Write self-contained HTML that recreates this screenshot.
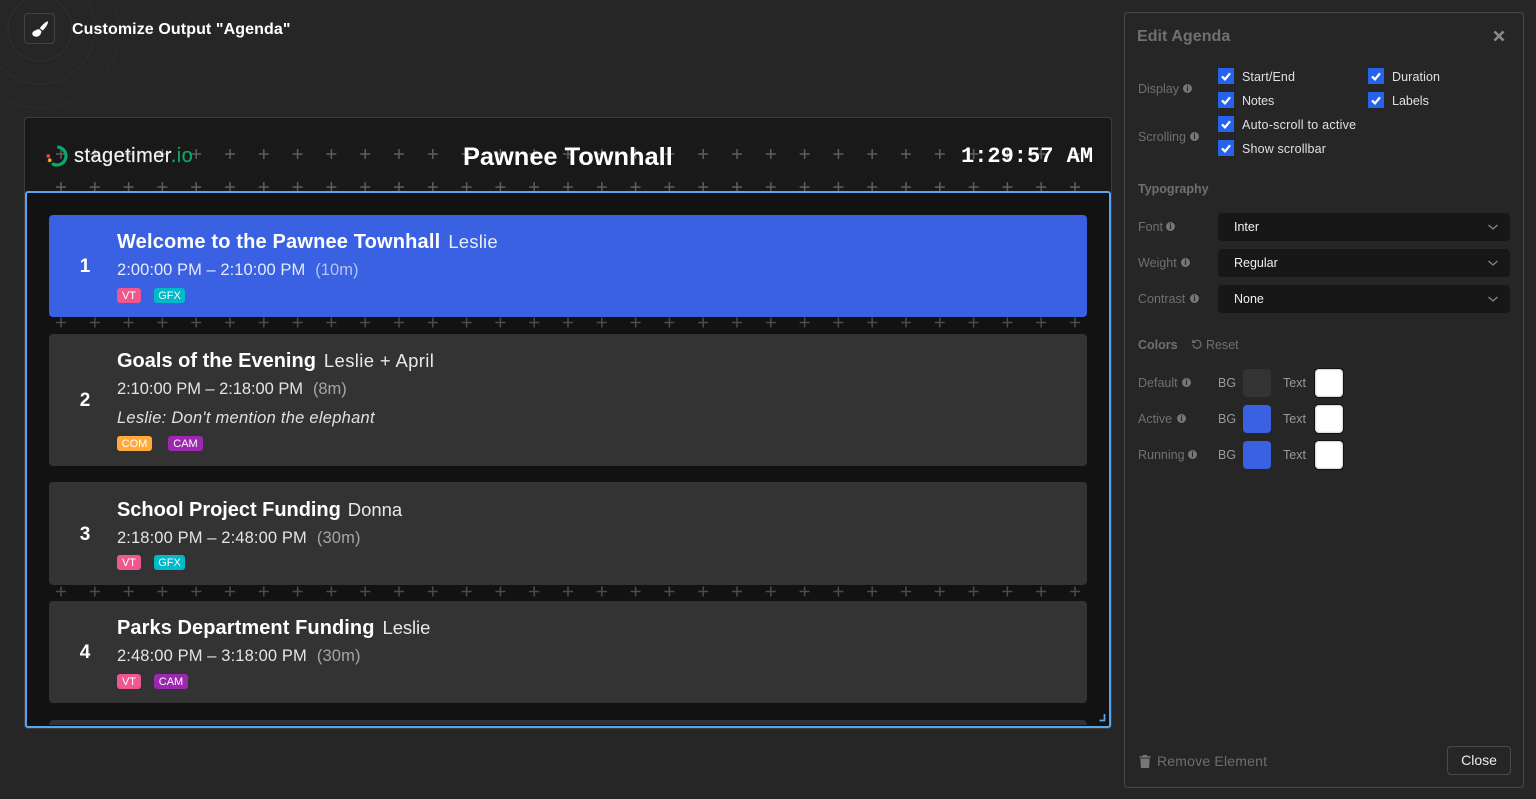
<!DOCTYPE html>
<html><head><meta charset="utf-8"><title>Customize Output</title>
<style>
html,body{margin:0;padding:0;width:1536px;height:799px;overflow:hidden;background:#262626}
body{position:relative;font-family:"Liberation Sans",sans-serif;color:#fff}
.a,.t{position:absolute}
.t{white-space:nowrap;line-height:20px;height:20px}
.card{position:absolute;left:49px;width:1038px;background:#333;border-radius:4px}
.n{font-size:19px;font-weight:bold;width:24px;text-align:center;left:73px}
.h{font-size:20px;font-weight:bold;left:117px}
.h span{font-weight:normal;font-size:18.5px;margin-left:8px;color:#e8e8e8}
.tm{font-size:16.5px;left:117px;color:#e4e4e4}
.tm span{color:#a5a5a5;margin-left:10px;font-size:16.5px}
.b .tm{color:#e6ebfb}.b .tm span{color:#b4c4f2}.b .h span{color:#e8edfc}
.tag{position:absolute;height:15px;line-height:16px;border-radius:3px;font-size:11px;color:#fff;text-align:center}
.l{font-size:12.5px;color:#707070;left:1138px}
.cl{font-size:12.5px;color:#e0e0e0;left:1242px;letter-spacing:.1px}
.cb{position:absolute;width:16px;height:16px;background:#2563eb}
.sel{position:absolute;left:1218px;width:292px;height:28px;background:#171717;border-radius:4px}
.sel .t{left:16px;top:4px;font-size:12.5px;color:#f0f0f0}
.sw{position:absolute;width:28px;height:28px;border-radius:4px}
.w{background:#fff;box-shadow:inset 0 0 2px #999,0 0 0 1px #111}
.s{font-size:12.5px;color:#999}
.i{position:absolute;width:9px;height:9px;border-radius:50%;background:#767676;color:#262626;font-size:8px;line-height:9px;text-align:center;font-weight:bold}
</style></head><body>

<svg class="a" style="left:0;top:0" width="140" height="120"><g fill="none" stroke-width="1"><circle cx="40" cy="29" r="32" stroke="#303030"/><circle cx="40" cy="29" r="55" stroke="#2e2e2e"/><circle cx="40" cy="29" r="79" stroke="#2c2c2c"/></g></svg>
<div class="a" style="left:24px;top:13px;width:29px;height:29px;border:1.5px solid #424242;border-radius:4px;background:#262626"></div>
<svg class="a" style="left:30px;top:20px" width="20" height="20" viewBox="0 0 20 20"><path d="M18 1.200C18.500 4 14.500 9 12.500 10.500L9.800 8.300C11.500 5.500 15 2 18 1.200z" fill="#fff"/><path d="M9.300 9.300l2 1.800c.2 3-2 5.600-5 5.600-2 0-4-1-4-2.800 0-2 1.500-3 3-3.400.5-.7 2-1.200 4-1.200z" fill="#fff"/></svg>
<div class="t" style="left:72px;top:20px;font-size:16px;font-weight:bold;letter-spacing:.1px">Customize Output "Agenda"</div>

<div class="a" style="left:24px;top:117px;width:1086px;height:610px;background:#191919;border:1px solid #3c3c3c;border-radius:4px"></div>
<svg class="a" style="left:0;top:0" width="1120" height="200" fill="none">
<path d="M56 154H1081M56 187H1081" stroke="#5e5e5e" stroke-width="1.500" stroke-dasharray="10 23.800"/>
<path d="M60.250 154H1081M60.250 187H1081" stroke="#5e5e5e" stroke-width="10" stroke-dasharray="1.500 32.300"/>
</svg>

<div class="a" style="left:25px;top:191px;width:1082px;height:533px;background:#121212;border:2px solid #5aa5f0;border-radius:3px"></div>
<svg class="a" style="left:0;top:300px" width="1120" height="310" fill="none">
<path d="M56 22.500H1081M56 291.500H1081" stroke="#4c4c4c" stroke-width="1.500" stroke-dasharray="10 23.800"/>
<path d="M60.250 22.500H1081M60.250 291.500H1081" stroke="#4c4c4c" stroke-width="10" stroke-dasharray="1.500 32.300"/>
</svg>

<svg class="a" style="left:44px;top:143px" width="26" height="26" viewBox="0 0 26 26"><path d="M13.300 4A9 9 0 1 1 8 20.500" fill="none" stroke="#0aa86a" stroke-width="3.200"/><circle cx="4.300" cy="13" r="1.900" fill="#e5433f"/><circle cx="5.700" cy="17.300" r="1.900" fill="#f5a524"/></svg>
<div class="t" style="left:74px;top:146px;font-size:20px;letter-spacing:.45px;color:#f2f2f2;-webkit-text-stroke:.2px #f2f2f2">stagetimer<span style="color:#0aa86a;-webkit-text-stroke:.2px #0aa86a">.io</span></div>
<div class="t" style="left:463px;top:147px;font-size:25.4px;font-weight:bold;line-height:20px">Pawnee Townhall</div>
<div class="t" style="left:961px;top:147px;font-size:22px;font-weight:bold;font-family:'Liberation Mono',monospace">1:29:57 AM</div>

<div class="card b" style="top:215px;height:102px;background:#3961e2"></div>
<div class="b">
<div class="t n" style="top:257px">1</div>
<div class="t h" style="top:232px;letter-spacing:.17px">Welcome to the Pawnee Townhall<span style="letter-spacing:.2px">Leslie</span></div>
<div class="t tm" style="top:260px;letter-spacing:.05px">2:00:00 PM – 2:10:00 PM<span>(10m)</span></div>
</div>
<div class="tag" style="left:117px;top:288px;width:24px;background:#f0578f">VT</div>
<div class="tag" style="left:154px;top:288px;width:31px;background:#00b9c9">GFX</div>

<div class="card" style="top:334px;height:132px"></div>
<div class="t n" style="top:391px">2</div>
<div class="t h" style="top:351px">Goals of the Evening<span style="letter-spacing:.35px">Leslie + April</span></div>
<div class="t tm" style="top:379px;letter-spacing:-.05px">2:10:00 PM – 2:18:00 PM<span>(8m)</span></div>
<div class="t" style="left:117px;top:408px;font-size:16.500px;font-style:italic;color:#e0e0e0;letter-spacing:.26px">Leslie: Don't mention the elephant</div>
<div class="tag" style="left:117px;top:436px;width:35px;background:#ffaa3b">COM</div>
<div class="tag" style="left:168px;top:436px;width:35px;background:#9c27b0">CAM</div>

<div class="card" style="top:482px;height:103px"></div>
<div class="t n" style="top:525px">3</div>
<div class="t h" style="top:500px;letter-spacing:-.03px">School Project Funding<span style="margin-left:7px">Donna</span></div>
<div class="t tm" style="top:528px;letter-spacing:.12px">2:18:00 PM – 2:48:00 PM<span>(30m)</span></div>
<div class="tag" style="left:117px;top:555px;width:24px;background:#f0578f">VT</div>
<div class="tag" style="left:154px;top:555px;width:31px;background:#00b9c9">GFX</div>

<div class="card" style="top:601px;height:102px"></div>
<div class="t n" style="top:643px">4</div>
<div class="t h" style="top:618px;letter-spacing:.08px">Parks Department Funding<span style="letter-spacing:-.1px">Leslie</span></div>
<div class="t tm" style="top:646px;letter-spacing:.12px">2:48:00 PM – 3:18:00 PM<span>(30m)</span></div>
<div class="tag" style="left:117px;top:674px;width:24px;background:#f0578f">VT</div>
<div class="tag" style="left:154px;top:674px;width:34px;background:#9c27b0">CAM</div>

<div class="card" style="top:720px;height:5px;border-radius:4px 4px 0 0;background:#2d3338"></div>
<svg class="a" style="left:1097px;top:713px" width="10" height="10"><path d="M7.500 1V7.500H2.500" fill="none" stroke="#5aa5f0" stroke-width="1.700"/></svg>

<div class="a" style="left:1124px;top:12px;width:398px;height:774px;border:1px solid #4a4a4a;border-radius:4px"></div>
<div class="t" style="left:1137px;top:27px;font-size:16px;font-weight:bold;color:#707070;letter-spacing:.05px">Edit Agenda</div>
<svg class="a" style="left:1493px;top:30px" width="12" height="12"><path d="M1.500 1.500L10.500 10.500M10.500 1.500L1.500 10.500" stroke="#8a8a8a" stroke-width="2.600"/></svg>

<div class="t l" style="top:79px">Display</div><div class="i" style="left:1183px;top:84px">i</div>
<div class="t l" style="top:127px">Scrolling</div><div class="i" style="left:1190px;top:132px">i</div>

<div class="cb" style="left:1218px;top:68px"></div><div class="cb" style="left:1368px;top:68px"></div>
<div class="cb" style="left:1218px;top:92px"></div><div class="cb" style="left:1368px;top:92px"></div>
<div class="cb" style="left:1218px;top:116px"></div><div class="cb" style="left:1218px;top:140px"></div>
<svg class="a" style="left:1218px;top:68px" width="166" height="88" fill="none" stroke="#fff" stroke-width="2.300"><path d="M4 8.500l3 2.800 5-6M154 8.500l3 2.800 5-6M4 32.500l3 2.800 5-6M154 32.500l3 2.800 5-6M4 56.500l3 2.800 5-6M4 80.500l3 2.800 5-6"/></svg>
<div class="t cl" style="top:67px">Start/End</div>
<div class="t cl" style="left:1392px;top:67px">Duration</div>
<div class="t cl" style="top:91px;letter-spacing:-.1px">Notes</div>
<div class="t cl" style="left:1392px;top:91px;letter-spacing:0">Labels</div>
<div class="t cl" style="top:115px;letter-spacing:.25px">Auto-scroll to active</div>
<div class="t cl" style="top:139px;letter-spacing:.15px">Show scrollbar</div>

<div class="t l" style="top:179px;font-weight:bold">Typography</div>

<div class="t l" style="top:217px">Font</div><div class="i" style="left:1166px;top:222px">i</div>
<div class="t l" style="top:253px">Weight</div><div class="i" style="left:1181px;top:258px">i</div>
<div class="t l" style="top:289px">Contrast</div><div class="i" style="left:1190px;top:294px">i</div>
<div class="sel" style="top:213px"><div class="t">Inter</div></div>
<div class="sel" style="top:249px"><div class="t">Regular</div></div>
<div class="sel" style="top:285px"><div class="t">None</div></div>
<svg class="a" style="left:1487px;top:222px" width="12" height="84" fill="none" stroke="#8a8a8a" stroke-width="1.200"><path d="M1.500 3l4.500 4 4.500-4M1.500 39l4.500 4 4.500-4M1.500 75l4.500 4 4.500-4"/></svg>

<div class="t l" style="top:335px;font-weight:bold">Colors</div>
<svg class="a" style="left:1191px;top:339px" width="11" height="11" fill="none" stroke="#767676" stroke-width="1.100"><path d="M2 5.500A4 4 0 1 0 4 1.800L1.800 3.500M1.800 .8V3.500H4.500"/></svg>
<div class="t l" style="left:1206px;top:335px">Reset</div>

<div class="t l" style="top:373px">Default</div><div class="i" style="left:1182px;top:378px">i</div>
<div class="t l" style="top:409px">Active</div><div class="i" style="left:1177px;top:414px">i</div>
<div class="t l" style="top:445px">Running</div><div class="i" style="left:1188px;top:450px">i</div>

<div class="t s" style="left:1218px;top:373px">BG</div><div class="t s" style="left:1283px;top:373px">Text</div>
<div class="t s" style="left:1218px;top:409px">BG</div><div class="t s" style="left:1283px;top:409px">Text</div>
<div class="t s" style="left:1218px;top:445px">BG</div><div class="t s" style="left:1283px;top:445px">Text</div>
<div class="sw" style="left:1243px;top:369px;background:#333"></div>
<div class="sw" style="left:1243px;top:405px;background:#3961e2"></div>
<div class="sw" style="left:1243px;top:441px;background:#3961e2"></div>
<div class="sw w" style="left:1315px;top:369px"></div>
<div class="sw w" style="left:1315px;top:405px"></div>
<div class="sw w" style="left:1315px;top:441px"></div>

<svg class="a" style="left:1139px;top:755px" width="12" height="13" fill="#777"><path d="M4 0h4l.6 1.200H11.500V2.600H.5V1.200H3.400zM1.300 3.500h9.400l-.6 9.500H1.900z"/></svg>
<div class="t" style="left:1157px;top:751px;font-size:14px;color:#6e6e6e;letter-spacing:.2px">Remove Element</div>
<div class="a" style="left:1447px;top:746px;width:62px;height:27px;border:1px solid #4a4a4a;border-radius:4px"></div>
<div class="t" style="left:1447px;top:750px;width:64px;text-align:center;font-size:14px;color:#eee">Close</div>
</body></html>
